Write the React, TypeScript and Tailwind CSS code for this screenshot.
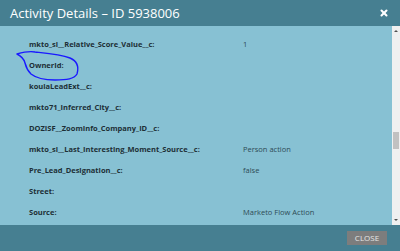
import { X } from "lucide-react";

const rows = [
  { label: "mkto_si__Relative_Score_Value__c:", value: "1" },
  { label: "OwnerId:", value: "" },
  { label: "koulaLeadExt__c:", value: "" },
  { label: "mkto71_Inferred_City__c:", value: "" },
  { label: "DOZISF__ZoomInfo_Company_ID__c:", value: "" },
  { label: "mkto_si__Last_Interesting_Moment_Source__c:", value: "Person action" },
  { label: "Pre_Lead_Designation__c:", value: "false" },
  { label: "Street:", value: "" },
  { label: "Source:", value: "Marketo Flow Action" },
];

export default function App() {
  return (
    <div
      className="relative flex flex-col w-[400px] h-[251px] overflow-hidden bg-[#87c1d3]"
      style={{ fontFamily: '"Open Sans", "Liberation Sans", sans-serif' }}
    >
      {/* header */}
      <div className="h-[26px] flex items-center justify-between bg-[#467f91] pl-[10px] pr-[11px]">
        <span className="text-[13px] text-white leading-none">Activity Details – ID 5938006</span>
        <X className="w-[10px] h-[10px] text-white" strokeWidth={5} />
      </div>

      {/* body */}
      <div className="flex-1 flex">
        <div className="flex-1 pl-[29px] pt-[8px]">
          {rows.map((row, i) => (
            <div key={i} className="flex items-center h-[21px]">
              <span className="w-[214px] text-[7.5px] font-bold text-[#1d2f36]">{row.label}</span>
              <span className="text-[7.5px] text-[#2e4b56]">{row.value}</span>
            </div>
          ))}
        </div>
        <div className="w-[8px] bg-[#f0f0f0] flex flex-col items-center justify-between py-[4px]">
          <span className="block w-0 h-0 border-l-[2px] border-r-[2px] border-b-[2px] border-l-transparent border-r-transparent border-b-[#505050]" />
          <span className="block w-0 h-0 border-l-[2px] border-r-[2px] border-t-[2px] border-l-transparent border-r-transparent border-t-[#505050]" />
        </div>
      </div>

      {/* footer */}
      <div className="h-[26px] flex items-center justify-end bg-[#467f91] pr-[13px]">
        <button className="w-[40px] h-[14px] bg-[#7d7d7d] text-[8px] text-[#e6e6e6] leading-none">CLOSE</button>
      </div>

      {/* scrollbar thumb */}
      <div className="absolute left-[393px] top-[132px] w-[6px] h-[17px] bg-[#c1c1c1]" />

      {/* hand-drawn mark */}
      <svg className="absolute inset-0 pointer-events-none" width="400" height="251">
        <path
          d="M17 54 C24 52 30 51 35 52 C45 53 60 54 70 58 C77 61 79 67 77 74 C74 79 67 80 55 80 C45 80 36 78 31 74 C28 71 26 67 25 63 C24 59 21 56 17 54"
          fill="none"
          stroke="#1a1aff"
          strokeWidth="1.4"
          strokeLinecap="round"
        />
      </svg>
    </div>
  );
}
